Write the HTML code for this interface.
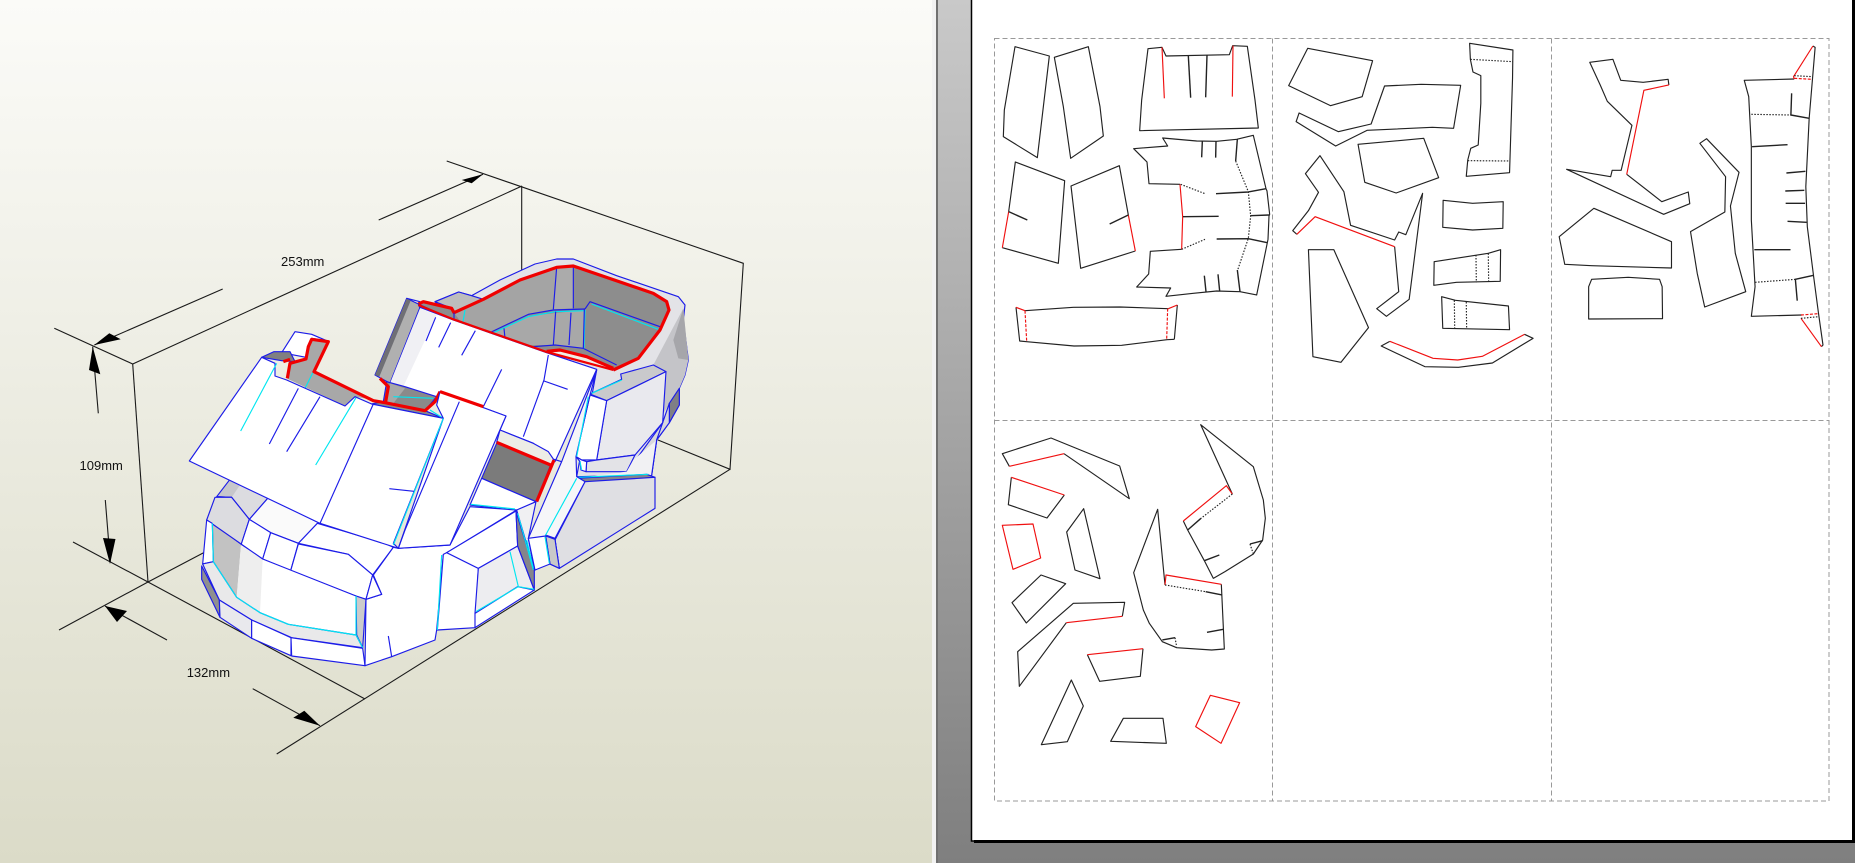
<!DOCTYPE html>
<html><head><meta charset="utf-8"><title>Papercraft</title>
<style>
html,body{margin:0;padding:0;width:1855px;height:863px;overflow:hidden;background:#808080}
svg{position:absolute;left:0;top:0;display:block}
svg *{vector-effect:non-scaling-stroke}
text{font-family:"Liberation Sans",sans-serif;font-size:13px;fill:#111}
.k{stroke:#1a1a1a;stroke-width:1.1;fill:none}
.b polygon,.b polyline,.b path{stroke:#1c1ce8;stroke-width:1.15;stroke-linejoin:round}
.n{fill:none}
.c{fill:none;stroke:#00e6f0 !important;stroke-width:1.15}
.r{fill:none;stroke:#f00000 !important;stroke-width:3.2 !important;stroke-linejoin:round}
.pp polygon,.pp polyline{fill:none;stroke:#222;stroke-width:1.15;stroke-linejoin:round}
.pp .rd{stroke:#f01010}
.pp .ds{stroke-dasharray:1.5 1.5;stroke:#222}
.pp .rs{stroke-dasharray:3 1.5;stroke:#f01010}
.pp .t{stroke-width:1.4}
</style></head><body>
<svg width="1855" height="863" viewBox="0 0 1855 863" xmlns="http://www.w3.org/2000/svg">
<defs>
<linearGradient id="g1" x1="0" y1="0" x2="0" y2="1"><stop offset="0" stop-color="#fbfbf8"/><stop offset="1" stop-color="#dbdbc8"/></linearGradient>
<linearGradient id="g2" x1="0" y1="0" x2="0" y2="1"><stop offset="0" stop-color="#c9c9c9"/><stop offset="1" stop-color="#7f7f7f"/></linearGradient>
</defs>
<rect x="0" y="0" width="932" height="863" fill="url(#g1)"/>
<rect x="932" y="0" width="4" height="863" fill="#f2f2f2"/>
<rect x="936" y="0" width="2" height="863" fill="#707070"/>
<rect x="938" y="0" width="917" height="863" fill="url(#g2)"/>
<rect x="971.5" y="-2" width="882" height="843" fill="#fff" stroke="#000" stroke-width="1.5"/>
<rect x="974" y="840" width="881" height="3" fill="#000"/>
<rect x="1852" y="0" width="3" height="843" fill="#000"/>

<!-- bounding box lines -->
<g class="k">
<path d="M54.3 328.3L132.7 364L522 186"/>
<path d="M132.7 364L148 582"/>
<path d="M446.7 161L743.3 263.3L730 469.3L658 440"/>
<path d="M521.7 186V270"/>
<path d="M730 469.3L276.7 754"/>
<path d="M59 630L148 582L205 552"/>
<path d="M73 542L148 582L365 699"/>
<path d="M378.7 220L483 174.3"/>
<path d="M222.7 289L94.3 345"/>
<path d="M98.3 413.3L92.7 346.7"/>
<path d="M105.3 500L110.3 562"/>
<path d="M105 606L167 640"/>
<path d="M252.7 688.7L320 725.7"/>
</g>
<g fill="#000">
<polygon points="483,174.3 461.7,180 471.7,183.3"/>
<polygon points="94.3,345 109.3,333.3 120.7,339.3"/>
<polygon points="92.7,346.7 89,370 100.3,374.3"/>
<polygon points="110,564 103,538 115.5,539"/>
<polygon points="105,606 127,611 117,622"/>
<polygon points="320,725.7 304.3,710.7 293.3,717.7"/>
</g>
<text x="281" y="266">253mm</text>
<text x="79.5" y="470">109mm</text>
<text x="186.7" y="677">132mm</text>

<!-- MODEL: Z2 group (origin 400,230) -->
<g class="b" transform="translate(400,230) scale(.33333)">
<polygon fill="#e3e3e7" points="176,186 215,197 300,150 405,102 470,87 520,87 650,137 835,200 855,225 850,270 865,390 855,435 838,475 838,525 808,578 770,630 755,735 530,740 590,420 160,270 105,215"/>
<polygon class="n" style="fill:#bdbdbd" points="176,186 215,197 250,208 162,248 155,235 105,215"/>
<polygon fill="#c4c4c8" style="stroke:none" points="850,235 865,390 855,435 838,475 790,550 800,425 760,405 810,310"/>
<polygon fill="#a6a6aa" style="stroke:none" points="850,235 865,390 835,385 820,330"/>
<polygon fill="#7f7f85" points="838,475 838,525 808,578 808,520"/>
<polygon fill="#d8d8dc" points="808,520 808,578 770,630 755,735 700,700 788,578"/>
<polygon fill="#8d8d8d" points="55,222 70,215 155,235 162,248 250,208 360,150 470,112 520,108 760,190 800,215 807,240 780,300 715,385 640,420 440,368 160,270"/>
<polygon style="stroke:none" fill="#a4a4a4" points="250,208 360,150 470,112 460,238 385,253 265,310 200,300 162,248"/>
<polygon style="stroke:none" fill="#ababab" points="470,112 520,108 520,235 460,238"/>
<polygon style="stroke:none" fill="#a8a8a8" points="385,258 553,240 552,355 465,345 390,345 300,330 270,312"/>
<polygon fill="#eeeee6" style="stroke:none" points="440,366 480,360 560,380 640,415 620,418"/>
<path class="n" d="M265,310L385,253L460,240L555,237"/>
<path class="n" d="M555,237L570,215L780,290"/>
<path class="n" d="M400,350L465,345L550,355L650,405"/>
<path class="c" d="M272,312L385,260L465,245L555,242"/>
<path class="c" d="M575,222L775,298"/>
<path class="c" d="M555,240L552,355"/>
<path class="n" d="M470,112L460,238M520,108V235M467,245L460,345M513,248L507,345M553,237L550,355M312,295L315,325"/>
<path class="r" d="M55,222L70,215L155,235L162,248L250,208L360,150L470,112L520,108L760,190L800,215L807,240L780,300L715,385L640,420"/>
<path class="r" d="M440,364L480,360L560,380L640,415"/>

<!-- right block upper -->
<polygon fill="#c9c9cc" points="570,492 665,448 662,432 760,405 798,425 620,512"/>
<path class="c" d="M575,490L665,450"/>
<polygon fill="#e9e9ee" points="620,512 798,425 788,578 705,675 590,690"/>
<polygon fill="#ffffff" points="570,495 620,512 590,690 545,690 528,680"/>
<polygon fill="#e3e3e7" points="560,695 590,690 705,675 680,725 558,725"/>
<polygon fill="#fff" points="528,680 545,690 560,695 558,725 543,720 540,695"/>
<polygon fill="#f1f1f3" style="stroke:none" points="700,690 770,630 755,735 530,745 680,725"/>
<path class="n" d="M788,578L770,630L755,735"/>
<!-- lower right block -->
<polygon fill="#85858a" points="530,745 740,733 765,742 560,757"/>
<path class="c" d="M533,742L745,733"/>
<polygon fill="#dfdfe3" points="555,755 765,742 765,835 478,1015 465,930"/>
<polygon fill="#c9c9c9" points="437,915 465,928 478,1015 445,1000"/>
<polygon fill="#f6f6f8" points="590,420 570,495 528,680 530,740 555,755 465,925 437,915 445,1000 405,1020 385,925 485,695"/>
<path class="c" d="M585,418L465,690"/>
<path class="c" d="M565,500L530,680M540,695L545,720"/>
<path class="c" d="M530,745L437,915L445,1000"/>
<path class="n" d="M590,422L580,420"/>

<!-- rear upper white panel -->
<polygon fill="#b0b0b0" points="20,205 -75,435 -30,460 60,235 55,222"/>
<polygon fill="#6f6f75" style="stroke:none" points="20,205 -75,435 -62,440 32,212"/>
<polygon fill="#ffffff" points="60,232 160,270 440,368 590,418 465,695 400,640 300,600 318,558 120,485 100,515 75,540 40,500 -30,460"/>
<polygon style="stroke:none" fill="#f0f0f4" points="60,235 -30,460 10,470 110,255"/>
<path class="n" d="M20,205L60,215"/>
<path class="n" d="M78,333L107,262M116,352L152,278M185,376L226,302M305,418L250,530M445,375L432,450L370,620M432,453L503,478"/>
<path class="c" d="M195,240L188,282"/>
<path class="n" d="M162,248L162,272"/>
<path class="r" style="stroke-width:2.2 !important" d="M55,225L160,268L440,366L640,420"/>
<!-- mid dark section -->
<polygon fill="#7b7b7b" points="245,745 290,640 452,705 408,815"/>
<polygon fill="#ededE6" points="300,600 400,640 445,665 462,690 452,705 290,637"/>
<path class="r" d="M290,637L452,705"/>
<path class="r" d="M462,690L410,815"/>
<polygon fill="#ffffff" points="245,745 408,815 350,842 210,825"/>
<path class="n" d="M485,695L462,688"/>
</g>

<!-- Z1 small notch bits -->
<g class="b" transform="translate(0,130) scale(.33333)">
<polygon fill="#a8a8a8" style="stroke:none" points="860,745 870,700 918,687 935,630 985,635 942,725 1130,812 1065,800 1035,828"/>
<polygon fill="#ffffff" points="845,668 885,605 935,613 980,632 935,625 918,682"/>
<polygon fill="#808080" points="785,682 822,665 870,665 885,695 845,692"/>
<polygon fill="#8a8a8a" points="1160,755 1215,770 1310,800 1275,842 1330,865 1115,822 1150,815"/>
<polygon fill="#a8a8a8" style="stroke:none" points="1170,760 1215,775 1180,820 1155,815"/>
<path class="c" d="M1180,800L1300,805M915,775L940,725M1290,840L1330,865"/>
<path class="r" d="M862,745L870,700L918,687L925,650L935,628L985,635L942,725L1120,812L1155,818L1275,842L1305,815L1320,785"/>
<path class="r" d="M1140,745L1165,770L1157,815"/>
<path class="r" d="M850,695L870,688"/>
</g>

<!-- front head: Z3 group (origin 180,460) -->
<g class="b" transform="translate(180,460) scale(.33333)">
<polygon fill="#c7c7cb" points="110,110 150,58 265,113 208,178 155,112"/>
<polygon fill="#dcdce0" style="stroke:none" points="180,75 265,113 208,178 155,112"/>
<path class="n" d="M110,110L155,112L208,178L265,113"/>
<polygon fill="#dcdce0" points="80,180 105,112 155,112 208,178 183,255"/>
<polygon fill="#fafafa" points="208,178 265,113 420,190 355,250 272,218"/>
<polygon fill="#fff" points="208,178 272,218 248,297 183,255"/>
<polygon fill="#fff" points="272,218 355,250 332,332 248,297"/>
<polygon fill="#fff" points="355,250 412,190 615,250 640,262 578,345 505,283"/>
<polygon fill="#fff" points="332,332 355,252 505,283 578,345 558,418 528,408"/>
<polygon fill="#fff" style="stroke:none" points="97,190 183,255 248,297 528,408 528,525 325,493 240,458 170,412 100,305"/>
<polygon fill="#c2c2c2" style="stroke:none" points="97,190 183,255 170,412 100,305"/>
<polygon fill="#eeeeee" style="stroke:none" points="183,255 248,297 240,458 170,412"/>
<path class="n" d="M80,180L248,297L528,408"/>
<polygon fill="#fff" points="80,180 97,190 100,305 68,312"/>
<polygon fill="#e9e9ea" points="68,312 100,305 170,412 240,458 325,493 528,525 548,563 335,533 215,480 118,420"/>
<polygon fill="#8f8f8f" points="65,318 118,420 120,472 65,358"/>
<polygon fill="#e9e9ed" points="118,420 215,480 215,535 120,472"/>
<polygon fill="#fff" points="215,480 333,533 333,587 215,535"/>
<polygon fill="#fff" points="333,533 548,565 555,617 335,588"/>
<polygon fill="#cbcbcb" points="528,408 558,418 548,563 530,525"/>
<path class="c" d="M97,190L100,305L170,412L240,458L325,493L528,525L548,563M528,408V525"/>
<polygon fill="#fff" points="640,262 655,265 810,255 870,140 1010,150 790,285 770,510 765,540 635,590 555,617 558,418 605,403 580,345"/>
<polygon fill="#fff" points="578,345 605,403 558,418"/>
<path class="n" d="M625,528L635,590"/>
<polygon fill="#f0f0f2" points="1010,150 1068,125 1045,235 1063,330"/>
<polygon fill="#fff" points="800,278 895,325 885,503 772,510 790,283"/>
<polygon fill="#fff" points="800,278 1008,153 1013,258 895,325"/>
<polygon fill="#ededf0" points="895,325 1013,258 1063,390 885,460"/>
<polygon fill="#fff" points="885,460 1013,380 1063,390 885,503"/>
<polygon fill="#85858a" points="1008,155 1063,330 1063,390 1013,258"/>
<path class="c" d="M990,275L1015,380L888,455M1013,160L1060,330M785,285L772,510"/>
<path class="c" d="M872,133L1005,147"/>
<path class="c" d="M1015,380L1063,388"/>
<!-- right side little block -->
<polygon fill="#c9c9c9" points="1097,228 1125,238 1138,325 1110,312"/>
<polygon fill="#fff" points="1045,235 1097,228 1110,312 1065,330"/>
<path class="c" d="M1095,230L1108,310M1040,240L1060,325"/>
<!-- front white upper panel -->
<polygon fill="#fff" points="245,-308 285,-290 285,-252 320,-240 495,-162 525,-190 575,-168 790,-125 640,250 655,265 420,190 28,3"/>
<path class="n" d="M580,-168L420,190"/>
<path class="c" d="M290,-290L182,-87M528,-187L407,15"/>
<path class="n" d="M355,-215L268,-48M420,-190L320,-25"/>
<!-- panel 2 -->
<polygon fill="#fff" points="780,-205 978,-132 810,255 655,265 790,-125 770,-165"/>
<path class="c" d="M790,-125L640,255"/>
<path class="n" d="M838,-175L675,210L655,265"/>
<path class="n" d="M628,86L702,94"/>
<path class="r" d="M780,-205L910,-160"/>
</g>

<!-- dashed page grid -->
<g fill="none" stroke="#999" stroke-width="1" stroke-dasharray="5 3">
<rect x="994.5" y="38.5" width="834.5" height="762.5"/>
<path d="M1272.5 38.5V801M1551.5 38.5V801M994.5 420.5H1829"/>
</g>

<!-- page 1 pieces -->
<g class="pp" transform="translate(920,0) scale(.33333)">
<polygon points="285,140 388,168 352,473 250,410 253,330"/>
<polygon points="403,172 505,140 540,320 550,408 452,475 430,320"/>
<polygon points="684,146 726,142 738,168 928,164 938,137 982,139 1005,300 1015,384 659,392 665,300"/>
<polyline class="rd" points="726,142 733,295"/><polyline class="t" points="805,168 812,293"/><polyline class="t" points="861,166 857,292"/><polyline class="rd" points="939,137 937,290"/>
<polyline points="266,635 286,486 434,542 415,790 247,743"/><polyline class="rd" points="266,635 247,743"/><polyline class="t" points="266,635 322,660"/>
<polyline points="625,645 598,497 453,558 482,805 646,753"/><polyline class="rd" points="625,645 646,753"/><polyline class="t" points="625,645 569,672"/>
<polyline points="785,748 691,754 686,822 650,861 752,864 738,889 820,880 890,873 960,875 1010,885 1042,728 1044,718 1047,648 1049,643 1041,573 1038,566 1000,406 950,418 890,424 830,423 728,414 743,438 641,446 681,486 687,551 780,553"/>
<polyline class="rd" points="780,553 788,650 785,748"/>
<polyline class="t" points="847,424 845,472"/><polyline class="t" points="888,424 887,473"/><polyline class="t" points="952,418 947,483"/>
<polyline class="ds" points="947,483 985,575 992,648 985,715 953,810"/>
<polyline class="t" points="888,581 985,576 1038,566"/><polyline class="t" points="789,650 896,649"/><polyline class="t" points="991,647 1047,645"/><polyline class="t" points="890,717 985,716 1042,728"/>
<polyline class="t" points="952,810 960,875"/><polyline class="t" points="853,827 858,875"/><polyline class="t" points="894,823 899,873"/>
<polyline class="ds" points="782,553 855,581"/><polyline class="ds" points="785,748 855,718"/>
<polyline points="315,932 460,922 600,921 745,926"/><polyline points="763,1018 741,1019 605,1036 462,1038 320,1025 299,1023 288,922"/><polyline points="772,915 763,1018"/>
<polyline class="rd" points="288,922 315,932"/><polyline class="rd" points="745,926 772,915"/>
<polyline class="rs" points="315,932 320,1023"/><polyline class="rs" points="743,926 740,1019"/>
</g>

<!-- page 2,3 pieces -->
<g class="pp" transform="translate(1270,20) scale(.37313,.33333)">
<polygon points="101,85 275,122 247,230 162,257 50,197"/>
<polygon points="78,279 183,335 271,312 307,198 405,193 511,196 492,325 435,322 260,331 176,378 70,305"/>
<polygon points="535,70 651,90 650,175 642,458 526,469 530,420 538,385 558,375 565,250 565,167 544,156 537,118"/>
<polyline class="ds" points="537,118 651,125"/><polyline class="ds" points="530,422 643,423"/>
<polygon points="236,373 412,355 452,473 338,519 254,487"/>
<polyline points="72,643 61,632 103,572 130,517 95,461 134,407 198,515 216,616 334,660 345,636 364,644 409,520 373,838 312,889 286,866 345,815 334,680"/>
<polyline class="rd" points="334,680 121,590 72,643"/>
<polygon points="464,541 543,550 625,545 624,625 543,630 463,622"/>
<polygon points="440,725 585,700 618,689 617,784 500,787 439,796"/>
<polyline class="ds" points="552,705 553,787"/><polyline class="ds" points="585,700 586,785"/>
<polygon points="460,830 497,841 639,858 642,929 463,925"/>
<polyline class="ds" points="494,841 495,925"/><polyline class="ds" points="526,846 527,925"/>
<polygon points="103,689 171,689 264,923 190,1027 115,1010"/>
<polyline points="321,964 298,978 415,1040 505,1042 596,1029 705,955 682,943"/>
<polyline class="rd" points="321,964 437,1015 503,1020 569,1009 682,943"/>
<polyline points="1069,195 1067,178 1000,187 940,181 919,118 857,127 885,195 904,244 970,316 941,451 917,451 913,470 795,448 1055,583 1125,551 1121,516 1050,545 956,463"/>
<polyline class="rd" points="1069,195 1002,211 956,463"/>
<polygon points="868,565 1076,665 1076,744 862,737 790,733 775,650"/>
<polygon points="862,778 960,772 1044,778 1051,800 1052,896 854,897 854,800"/>
<polygon points="1170,356 1257,457 1234,558 1247,700 1275,815 1165,861 1145,760 1127,635 1219,576 1221,470 1152,370"/>
<polyline points="1405,177 1271,181 1283,230 1290,380 1290,600 1300,800 1290,889 1425,885"/>
<polyline points="1455,78 1461,82 1445,295 1436,500 1440,620 1457,770 1470,880 1482,975 1478,980"/>
<polyline class="rd" points="1405,177 1403,170 1455,78"/><polyline class="rd" points="1423,895 1478,980"/>
<polyline class="t" points="1398,220 1396,285 1445,295"/><polyline class="ds" points="1290,283 1396,285"/>
<polyline class="t" points="1292,380 1387,374"/><polyline class="t" points="1384,459 1435,454"/><polyline class="t" points="1381,513 1432,511"/><polyline class="t" points="1382,550 1434,550"/><polyline class="t" points="1387,604 1438,607"/><polyline class="t" points="1298,689 1395,689"/>
<polyline class="ds" points="1300,787 1408,778"/><polyline class="t" points="1413,842 1408,778 1457,766"/>
<polyline class="rs" points="1405,175 1453,178"/><polyline class="ds" points="1405,167 1453,170"/>
<polyline class="rs" points="1423,885 1470,881"/><polyline class="ds" points="1423,895 1470,890"/>
</g>

<!-- page 4 pieces -->
<g class="pp" transform="translate(980,410) scale(.33333)">
<polyline points="88,169 67,131 213,84 419,168 448,266 252,131"/><polyline class="rd" points="252,131 88,169"/>
<polyline points="253,255 201,324 85,284 94,202"/><polyline class="rd" points="94,202 253,255"/>
<polygon class="rd" points="67,346 159,342 182,444 99,478"/>
<polygon points="311,296 360,506 285,480 260,366"/>
<polygon points="183,495 257,521 139,639 96,578"/>
<polyline points="259,638 118,829 113,725 280,580 434,577 427,619"/><polyline class="rd" points="427,619 259,638"/>
<polyline points="322,734 359,814 481,799 489,716"/><polyline class="rd" points="322,734 489,716"/>
<polygon points="274,810 310,888 262,995 184,1004"/>
<polygon points="430,925 549,925 559,1000 392,994"/>
<polygon class="rd" points="691,856 779,878 723,1000 647,950"/>
<polyline points="757,252 662,44 820,170 850,270 856,325 848,390 820,432 735,485 700,505 673,452 623,360 610,333"/>
<polyline class="rd" points="610,333 739,227 757,252"/>
<polyline class="ds" points="757,252 663,325"/><polyline class="t" points="623,360 663,325"/><polyline class="t" points="673,452 718,435"/><polyline class="t" points="810,402 848,392"/><polyline class="ds" points="810,402 820,432"/>
<polyline points="555,525 533,298 461,488 490,600 508,640 547,695 590,713 695,720 733,717 724,523"/>
<polyline class="rd" points="555,525 558,495 724,523"/>
<polyline class="ds" points="555,525 677,545"/><polyline class="t" points="677,545 726,555"/><polyline class="t" points="681,667 730,658"/><polyline class="t" points="547,690 585,683"/><polyline class="ds" points="585,683 590,710"/>
</g>
</svg>
</body></html>
